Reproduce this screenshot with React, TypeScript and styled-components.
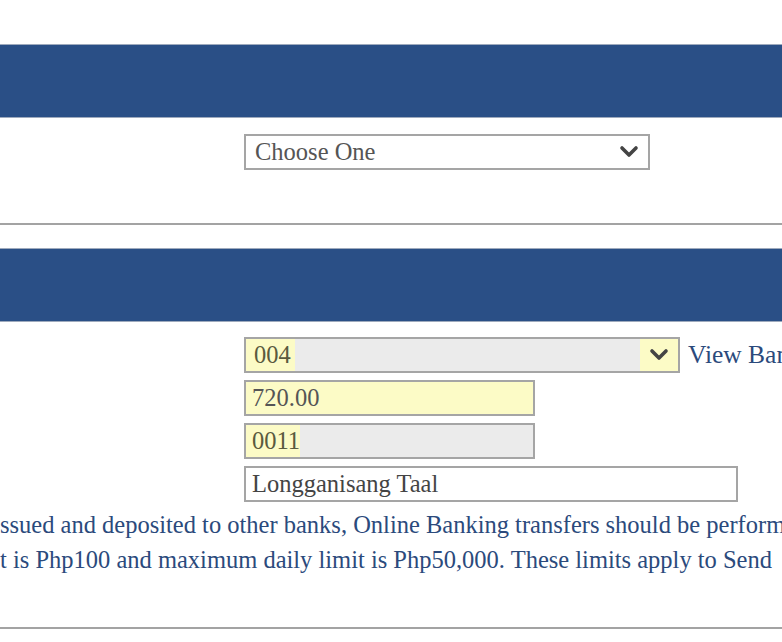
import styled, { createGlobalStyle } from "styled-components";

const Global = createGlobalStyle`
  html, body {
    margin: 0;
    padding: 0;
    background: #ffffff;
    overflow: hidden;
  }
`;

const Page = styled.div`
  width: 782px;
  height: 642px;
  overflow: hidden;
  padding-top: 44px;
  box-sizing: border-box;
  font-family: "Liberation Serif", "Times New Roman", serif;
`;

const SectionBar = styled.div`
  height: 72px;
  background: #2a4f86;
  border-top: 1px solid #9eaabd;
  border-bottom: 1px solid #9eaabd;
`;

const Rule = styled.div<{ $top: number }>`
  margin-top: ${(p) => p.$top}px;
  height: 2px;
  background: #a3a3a3;
`;

const Gap = styled.div<{ $h: number }>`
  height: ${(p) => p.$h}px;
`;

const Rows = styled.div<{ $top: number }>`
  display: flex;
  flex-direction: column;
  gap: 7px;
  padding: ${(p) => p.$top}px 0 0 244px;
`;

const Row = styled.div`
  display: flex;
  align-items: center;
  gap: 8px;
`;

const Field = styled.div<{ $w: number; $bg?: string }>`
  flex: 0 0 ${(p) => p.$w}px;
  width: ${(p) => p.$w}px;
  height: 36px;
  box-sizing: border-box;
  border: 2px solid #a5a5a5;
  background: ${(p) => p.$bg || "#ffffff"};
  display: flex;
  align-items: stretch;
  font-size: 24.5px;
  color: #555555;
  overflow: hidden;
`;

const Value = styled.span<{ $w?: number; $ink?: string; $pad?: number }>`
  display: flex;
  align-items: center;
  padding-left: ${(p) => p.$pad ?? 6}px;
  flex: ${(p) => (p.$w ? `0 0 ${p.$w}px` : "1")};
  box-sizing: border-box;
  white-space: nowrap;
  color: ${(p) => p.$ink || "#555555"};
`;

const Masked = styled.span`
  flex: 1;
  background: #ebebeb;
`;

const Chevron = styled.span`
  flex: 0 0 38px;
  display: flex;
  align-items: center;
  justify-content: center;
`;

const LinkText = styled.span`
  font-size: 25.5px;
  color: #2b4a7c;
  white-space: nowrap;
`;

const Notice = styled.div`
  margin-top: 5px;
  font-size: 24.5px;
  line-height: 35px;
  color: #2b4a7c;
  white-space: nowrap;
  overflow: hidden;
`;

const NoticeLine = styled.div`
  display: block;
`;

function ChevronIcon() {
  return (
    <svg width="20" height="14" viewBox="0 0 20 14">
      <path d="M3 3 L10 10 L17 3" fill="none" stroke="#444" strokeWidth="3.6" strokeLinecap="round" strokeLinejoin="round" />
    </svg>
  );
}

function App() {
  return (
    <Page>
      <Global />
      <SectionBar />
      <Rows $top={16}>
        <Row>
          <Field $w={406}>
            <Value $pad={9}>Choose One</Value>
            <Chevron>
              <ChevronIcon />
            </Chevron>
          </Field>
        </Row>
      </Rows>
      <Rule $top={53} />
      <Gap $h={23} />
      <SectionBar />
      <Rows $top={15}>
        <Row>
          <Field $w={436} $bg="#fcfbc6">
            <Value $w={49} $pad={8} $ink="#5a5a3e">004</Value>
            <Masked />
            <Chevron>
              <ChevronIcon />
            </Chevron>
          </Field>
          <LinkText>View Bank List</LinkText>
        </Row>
        <Row>
          <Field $w={291} $bg="#fcfbc6">
            <Value>720.00</Value>
          </Field>
        </Row>
        <Row>
          <Field $w={291} $bg="#fcfbc6">
            <Value $w={54} $ink="#5a5a3e">0011</Value>
            <Masked />
          </Field>
        </Row>
        <Row>
          <Field $w={494}>
            <Value $ink="#444444">Longganisang Taal</Value>
          </Field>
        </Row>
      </Rows>
      <Notice>
        <NoticeLine>
          ssued and deposited to other banks, Online Banking transfers should be perform
        </NoticeLine>
        <NoticeLine>
          t is Php100 and maximum daily limit is Php50,000. These limits apply to Send
        </NoticeLine>
      </Notice>
      <Rule $top={50} />
    </Page>
  );
}

export default App;
